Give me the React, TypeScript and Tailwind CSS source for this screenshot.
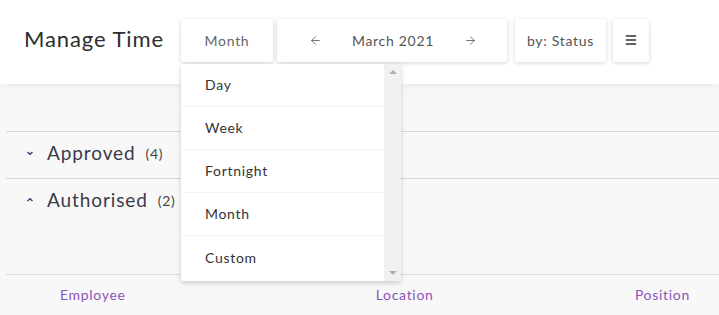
import { ArrowLeft, ArrowRight, Menu } from 'lucide-react';

const periods = ['Day', 'Week', 'Fortnight', 'Month', 'Custom'];

const groups = [
  { name: 'Approved', count: 4, open: false },
  { name: 'Authorised', count: 2, open: true },
];

function Chevron({ up }: { up: boolean }) {
  return (
    <svg width="8" height="6" viewBox="0 0 8 6" className="text-[#3a3a6a]">
      <path d={up ? 'M1.5 4 L4 1.8 L6.5 4' : 'M1.5 2 L4 4.2 L6.5 2'} fill="none" stroke="currentColor" strokeWidth="1.4" />
    </svg>
  );
}

export default function App() {
  return (
    <div className="w-[719px] h-[315px] overflow-hidden bg-[#f8f8f8] font-['Lato',sans-serif] text-[#333] tracking-[0.7px]">
      {/* Header */}
      <div className="h-[84px] bg-white shadow-[0_2px_6px_rgba(0,0,0,0.06)] flex items-center pl-[24px] pb-[4px] relative z-10">
        <h1 className="w-[157px] text-[22px] text-[#2e2e2e] tracking-[0.9px] mb-[4px]">Manage Time</h1>
        <div className="relative">
          <button className="w-[92px] h-[43px] bg-white rounded-[3px] shadow-[0_1px_4px_rgba(0,0,0,0.18)] text-[14px] text-[#666]">
            Month
          </button>
          {/* Dropdown */}
          <div className="absolute left-0 top-[45px] w-[220px] bg-white shadow-[0_2px_5px_rgba(0,0,0,0.18)] rounded-b-[2px] flex">
            <div className="flex-1 flex flex-col pb-[2px]">
              {periods.map((p, i) => (
                <div
                  key={p}
                  className={`h-[43px] flex items-center pl-[24px] text-[14px] text-[#333] ${i < periods.length - 1 ? 'border-b border-[#f4f4f4]' : ''}`}
                >
                  {p}
                </div>
              ))}
            </div>
            <div className="w-[17px] bg-[#f1f1f1] flex flex-col justify-between items-center py-[6px]">
              <div className="w-0 h-0 border-l-[4px] border-r-[4px] border-b-[4px] border-l-transparent border-r-transparent border-b-[#b0b0b0]" />
              <div className="w-0 h-0 border-l-[4px] border-r-[4px] border-t-[4px] border-l-transparent border-r-transparent border-t-[#b0b0b0]" />
            </div>
          </div>
        </div>
        <div className="ml-[4px] w-[230px] h-[43px] bg-white rounded-[3px] shadow-[0_1px_4px_rgba(0,0,0,0.18)] flex items-center justify-between pl-[32px] pr-[30px] text-[14px] text-[#555]">
          <ArrowLeft size={13} strokeWidth={1.5} />
          <span>March 2021</span>
          <ArrowRight size={13} strokeWidth={1.5} />
        </div>
        <button className="ml-[8px] w-[91px] h-[43px] bg-white rounded-[3px] shadow-[0_1px_4px_rgba(0,0,0,0.18)] text-[14px] text-[#555]">
          by: Status
        </button>
        <button className="ml-[7px] w-[36px] h-[43px] bg-white rounded-[3px] shadow-[0_1px_4px_rgba(0,0,0,0.18)] flex items-center justify-center text-[#333]">
          <Menu size={14} strokeWidth={2.5} />
        </button>
      </div>

      {/* Groups */}
      <div className="pl-[6px] pt-[47px]">
        {groups.map((g) => (
          <div key={g.name} className="h-[47px] border-t border-[#d6d6d6] flex items-center pl-[20px] pb-[4px]">
            <Chevron up={g.open} />
            <span className="ml-[13px] text-[19px] text-[#3a3a4a] tracking-[0.9px]">{g.name}</span>
            <span className="ml-[10px] text-[14px] text-[#444]">({g.count})</span>
          </div>
        ))}
        <div className="h-[49px]" />
        <div className="border-t border-[#dcdcdc] h-[40px] flex items-center text-[14px] text-[#8a55b8]">
          <span className="ml-[54px]">Employee</span>
          <span className="ml-[250px]">Location</span>
          <span className="ml-auto mr-[29px]">Position</span>
        </div>
      </div>
    </div>
  );
}
